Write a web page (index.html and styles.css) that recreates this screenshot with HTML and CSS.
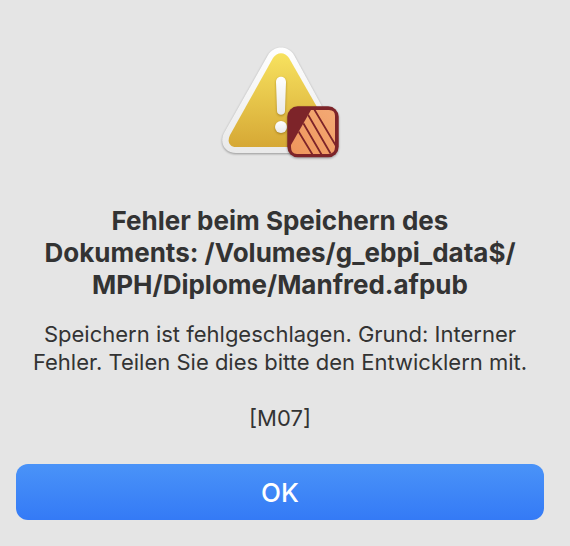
FILE: index.html
```html
<!DOCTYPE html>
<html lang="de">
<head>
    <meta charset="UTF-8">
    <meta name="viewport" content="width=device-width, initial-scale=1.0">
    <title>Fehler beim Speichern</title>
    <link rel="stylesheet" href="styles.css">
</head>
<body>
    <main class="dialog" role="alertdialog" aria-labelledby="title" aria-describedby="message">
        <svg class="icon" viewBox="0 0 128 128" aria-hidden="true">
            <defs>
                <linearGradient id="frame" x1="0" y1="0" x2="0" y2="1">
                    <stop offset="0" stop-color="#ffffff"/>
                    <stop offset="1" stop-color="#e9e9e9"/>
                </linearGradient>
                <linearGradient id="yellow" x1="0" y1="0" x2="0" y2="1">
                    <stop offset="0" stop-color="#f7e25f"/>
                    <stop offset="1" stop-color="#d6a835"/>
                </linearGradient>
                <linearGradient id="orange" x1="1" y1="0" x2="0" y2="1">
                    <stop offset="0" stop-color="#f4aa75"/>
                    <stop offset="1" stop-color="#ee955b"/>
                </linearGradient>
                <clipPath id="page">
                    <path d="M95 70H113Q119 70 119 76V107Q119 114 112 114H81Q75 114 75 107V105Z"/>
                </clipPath>
            </defs>

            <!-- warning triangle -->
            <g class="shadow">
                <path fill="url(#frame)" d="M52 15C58 5 72 5 78 15L120 92C124 103 119 113 108 113H20C9 113 3 103 8 93Z"/>
            </g>
            <path fill="url(#yellow)" d="M57 18C61 11.500 69 11.500 73 18L117 95C120 101 117 107 110 107H20C13 107 11 101 14 95Z"/>
            <g class="mark" fill="url(#frame)">
                <path d="M60 42C60 35 70 35 70 42L69 71C69 76 61 76 61 71Z"/>
                <circle cx="65" cy="87" r="6"/>
            </g>

            <!-- app badge -->
            <g class="shadow">
                <rect x="71.300" y="66.300" width="51.400" height="51" rx="10.500" fill="#7d2429"/>
            </g>
            <g clip-path="url(#page)">
                <rect x="74" y="69" width="46" height="46" fill="url(#orange)"/>
                <path stroke="#7d2429" stroke-width="1.800" d="M98 69L120 106M91 73L116 116M86 81L107 117M81 89L98 117"/>
            </g>
        </svg>

        <h1 class="title" id="title">Fehler beim Speichern des<br>Dokuments: /Volumes/g_ebpi_data$/<br>MPH/Diplome/Manfred.afpub</h1>

        <div class="message" id="message">
            <p>Speichern ist fehlgeschlagen. Grund: Interner<br>Fehler. Teilen Sie dies bitte den Entwicklern mit.</p>
            <p>[M07]</p>
        </div>

        <button class="ok" type="button">OK</button>
    </main>
</body>
</html>
```

FILE: styles.css
```css
body {
    margin: 0;
    font-family: Inter, 'Liberation Sans', sans-serif;
    color: #333;
    background: #e5e5e5;
}

.dialog {
    display: flex;
    flex-direction: column;
    align-items: center;
    padding: 40px 26px 26px 16px;
    text-align: center;
}

.icon {
    width: 128px;
    height: 128px;
}

.shadow {
    filter: drop-shadow(0 1px 1px rgba(0, 0, 0, 0.35));
}

.mark {
    filter: drop-shadow(0 1px 1px rgba(110, 75, 0, 0.5));
}

.title {
    margin: 37px 0 19px;
    font-size: 26px;
    line-height: 32px;
    font-weight: 700;
    white-space: nowrap;
}

.message {
    display: flex;
    flex-direction: column;
    gap: 28px;
    font-size: 22px;
    line-height: 28px;
    white-space: nowrap;
}

.message p {
    margin: 0;
}

.ok {
    width: 100%;
    height: 56px;
    margin-top: 32px;
    border: none;
    border-radius: 12px;
    font-family: inherit;
    font-size: 26px;
    font-weight: 500;
    color: #fff;
    background: linear-gradient(#4a93f8, #347af6);
    cursor: pointer;
}

.ok:active {
    background: #2f6fe0;
}
```
